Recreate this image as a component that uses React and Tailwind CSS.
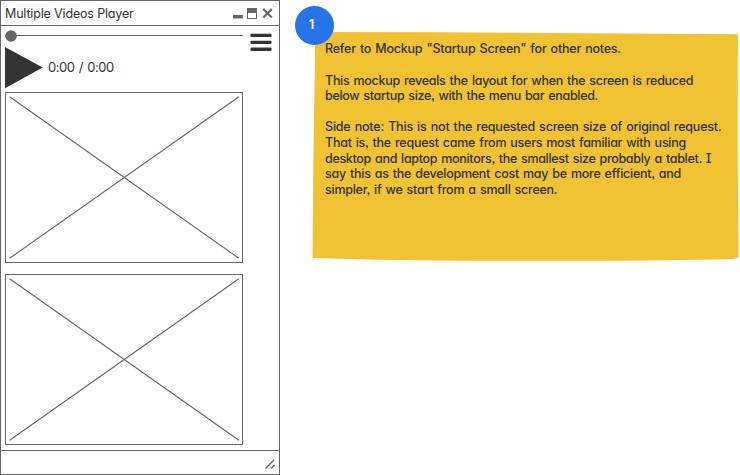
const textFont =
  "font-['Inter','Liberation_Sans',sans-serif] [font-feature-settings:'cv11','ss03'] text-[#333]";

const noteLines = [
  { text: 'Refer to Mockup "Startup Screen" for other notes.', tracking: "tracking-[-0.215px]" },
  { text: "", tracking: "" },
  { text: "This mockup reveals the layout for when the screen is reduced", tracking: "tracking-[-0.285px]" },
  { text: "below startup size, with the menu bar enabled.", tracking: "tracking-[-0.315px]" },
  { text: "", tracking: "" },
  { text: "Side note: This is not the requested screen size of original request.", tracking: "tracking-[-0.195px]" },
  { text: "That is, the request came from users most familiar with using", tracking: "tracking-[-0.255px]" },
  { text: "desktop and laptop monitors, the smallest size probably a tablet. ", tracking: "tracking-[-0.310px]", pronoun: "I" },
  { text: "say this as the development cost may be more efficient, and", tracking: "tracking-[-0.255px]" },
  { text: "simpler, if we start from a small screen.", tracking: "tracking-[-0.250px]" },
];

function VideoPlaceholder() {
  return (
    <div className="h-[171px] w-[238px] border border-[#666]">
      <svg className="block h-full w-full" viewBox="0 0 236 169" fill="none" stroke="#666" strokeWidth="1.1" strokeLinecap="round">
        <path d="M4 4L232.500 165M232.500 4L4 165" />
      </svg>
    </div>
  );
}

function TitleBar() {
  return (
    <header className="flex h-[25px] shrink-0 items-center justify-between border-b border-[#666] pl-1 pr-1.5">
      <h1 className="mt-px whitespace-nowrap text-[12.500px] leading-4 tracking-[-0.160px]">Multiple Videos Player</h1>
      <svg className="h-[12px] w-[40px] shrink-0" viewBox="0 0 40 12" fill="none">
        <path d="M0 8h10v3.500H0z" fill="#666" />
        <path d="M14 1h10v11H14z" fill="#666" />
        <path d="M15 6h8v5h-8z" fill="#fff" />
        <path d="M30.300 2l8.500 8.500M38.800 2l-8.500 8.500" stroke="#666" strokeWidth="2" />
      </svg>
    </header>
  );
}

function PlayerWindow() {
  return (
    <section className="flex h-[475px] w-[280px] shrink-0 flex-col border border-[#666] bg-white">
      <TitleBar />
      <main className="flex flex-1 justify-between pl-1 pr-[7px]">
        <div className="w-[238px]">
          <svg className="mt-[3px] block h-[13px] w-[238px]" viewBox="0 0 238 13">
            <path d="M0 6h238v1H0z" fill="#666" />
            <circle cx="6" cy="7" r="5.800" fill="#666" />
          </svg>
          <div className="mt-[5px] flex h-[42px] items-center">
            <svg className="h-[42px] w-[38px]" viewBox="0 0 38 42">
              <path d="M0 0L37.700 20.500L0 41.300z" fill="#333" />
            </svg>
            <span className="mb-[2px] ml-[5px] whitespace-nowrap text-[13px] leading-4 tracking-[-0.450px] [word-spacing:1px]">0:00 / 0:00</span>
          </div>
          <div className="mt-[3px] flex flex-col gap-[11px]">
            <VideoPlaceholder />
            <VideoPlaceholder />
          </div>
        </div>
        <button aria-label="Menu" className="mt-[7px] h-[19px] w-[22px]">
          <svg className="block h-[19px] w-[22px]" viewBox="0 0 22 19" fill="#333">
            <rect x="0.500" y="0.800" width="21" height="3.200" rx="0.800" />
            <rect x="0.500" y="7.700" width="21" height="3.200" rx="0.800" />
            <rect x="0.500" y="14.600" width="21" height="3.400" rx="0.800" />
          </svg>
        </button>
      </main>
      <footer className="flex h-6 shrink-0 items-end justify-end border-t border-[#666] pb-[5px] pr-[4px]">
        <svg className="h-[10px] w-[10px]" viewBox="0 0 10 10" fill="none" stroke="#666" strokeWidth="1.400">
          <path d="M0.500 9.500L9 1M6 9.500L9.800 5.700" />
        </svg>
      </footer>
    </section>
  );
}

function StickyNote() {
  return (
    <aside className="relative h-[475px] flex-1">
      <svg className="absolute left-0 top-0 h-[475px] w-[460px]" viewBox="0 0 460 475">
        <path d="M35 32L150 32.300L458 34.200L457.500 130L458.500 257Q456 259 448 259.200Q390 260.500 330 260.700Q200 261.300 100 259.700L32.500 258L33.500 150L35 60z" fill="#f1c232" />
        <circle cx="34.500" cy="25.500" r="19.500" fill="#2675e8" />
      </svg>
      <span className="absolute left-[14px] top-[16px] w-[35px] text-center text-[13px] font-semibold leading-4 text-white">1</span>
      <div className="relative pl-[45px] pt-[41.200px] text-[12.500px] font-[480] leading-[15.670px] [word-spacing:1px]">
        {noteLines.map((line, i) => (
          <p key={i} className={`h-[15.670px] whitespace-pre ${line.tracking}`}>
            {line.text}
            {line.pronoun && <span className="[font-feature-settings:'cv08']">{line.pronoun}</span>}
          </p>
        ))}
      </div>
    </aside>
  );
}

export default function App() {
  return (
    <div className={`flex h-[475px] w-[740px] overflow-hidden bg-white ${textFont}`}>
      <PlayerWindow />
      <StickyNote />
    </div>
  );
}
